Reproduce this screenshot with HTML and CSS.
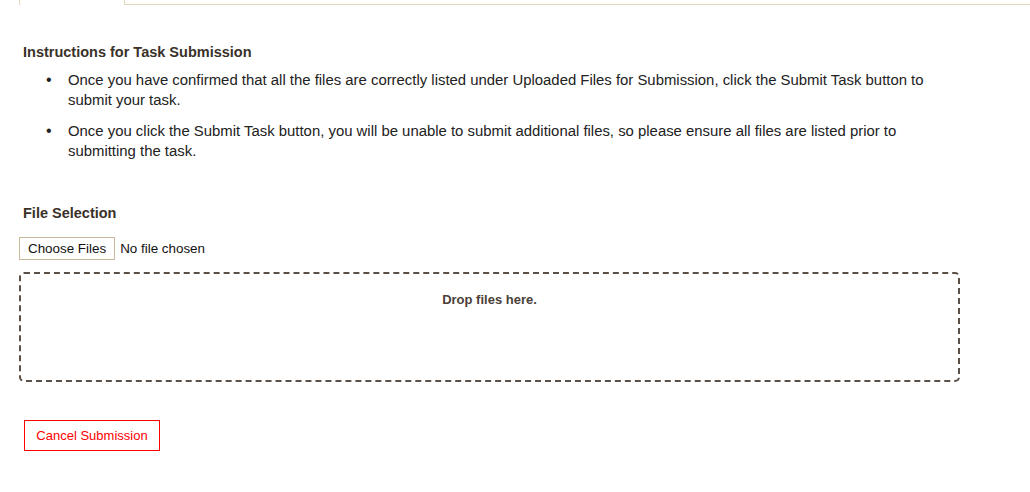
FILE: index.html
```html
<!DOCTYPE html>
<html lang="en">
<head>
  <meta charset="UTF-8" />
  <meta name="viewport" content="width=device-width, initial-scale=1.0" />
  <title>Task Submission</title>
  <link rel="stylesheet" href="styles.css">
</head>
<body>
  <div class="tabs">
    <div class="tab active"></div>
    <div class="tab-rest"></div>
  </div>

  <div class="content">
    <h3>Instructions for Task Submission</h3>
    <ul class="instructions">
      <li><span>Once you have confirmed that all the files are correctly listed under Uploaded Files for Submission, click the Submit Task button to submit your task.</span></li>
      <li><span>Once you click the Submit Task button, you will be unable to submit additional files, so please ensure all files are listed prior to submitting the task.</span></li>
    </ul>

    <h3 class="file-heading">File Selection</h3>
    <div class="file-row">
      <label class="choose-btn">Choose Files<input type="file" multiple class="file-input" /></label>
      <span class="file-name">No file chosen</span>
    </div>

    <div class="dropzone">Drop files here.</div>

    <button class="cancel-btn">Cancel Submission</button>
  </div>
</body>
</html>
```

FILE: styles.css
```css
body {
  margin: 0;
  font-family: "Liberation Sans", Arial, sans-serif;
  color: #333;
  background: #fff;
}
.tabs {
  display: flex;
  height: 5px;
  padding-left: 19px;
}
.tab {
  width: 104px;
  border-left: 1px solid #e2d6bd;
  border-right: 1px solid #e2d6bd;
}
.tab-rest {
  flex: 1;
  border-bottom: 1px solid #e2d6bd;
}
.content {
  padding: 0 0 0 19px;
}
h3 {
  margin: 39px 0 0 4px;
  font-size: 14.5px;
  font-weight: bold;
  color: #3a3129;
}
.instructions {
  list-style: none;
  margin: 10px 0 0 0;
  padding-left: 27px;
  padding-right: 90px;
  font-size: 14.9px;
  line-height: 20px;
  color: #222;
}
.instructions li {
  display: flex;
  margin-bottom: 11px;
}
.instructions li::before {
  content: "\2022";
  flex: 0 0 22px;
  font-size: 16px;
}
.file-heading {
  margin-top: 44px;
}
.file-row {
  display: flex;
  align-items: center;
  margin-top: 16px;
  font-size: 13.4px;
}
.choose-btn {
  display: inline-block;
  padding: 3px 8px 3px 8px;
  border: 1px solid #c9b99c;
  background: #fff;
  color: #111;
  line-height: 15px;
}
.file-input {
  display: none;
}
.file-name {
  margin-left: 5px;
  color: #111;
}
.dropzone {
  width: 937px;
  height: 88px;
  margin-top: 12px;
  padding-top: 18px;
  box-sizing: content-box;
  border: 2px dashed #5b5047;
  border-radius: 5px;
  text-align: center;
  font-size: 13px;
  font-weight: bold;
  color: #4a4038;
}
.cancel-btn {
  margin: 38px 0 0 5px;
  padding: 0 10px;
  height: 31px;
  width: 136px;
  background: #fff;
  border: 1px solid #f00;
  color: #f00;
  font-family: "Liberation Sans", Arial, sans-serif;
  font-size: 13px;
}
```
